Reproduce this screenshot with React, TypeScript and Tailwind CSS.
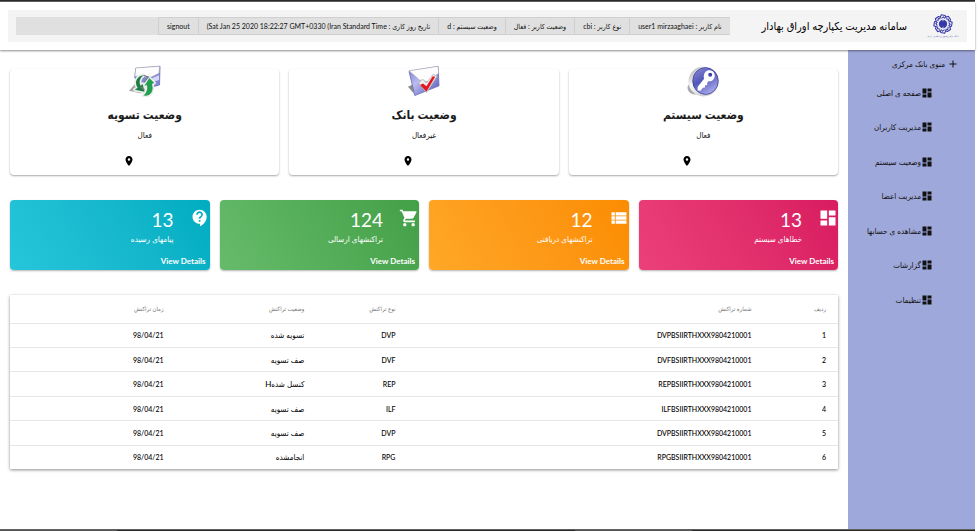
import type { ReactNode } from "react";
import {
  MdAdd,
  MdContactSupport,
  MdDashboard,
  MdRoom,
  MdShoppingCart,
  MdViewList,
} from "react-icons/md";

const headerItems = [
  "نام کاربر : user1 mirzaaghaei",
  "نوع کاربر : cbi",
  "وضعیت کاربر : فعال",
  "وضعیت سیستم : d",
];

const menuItems = [
  "صفحه ی اصلی",
  "مدیریت کاربران",
  "وضعیت سیستم",
  "مدیریت اعضا",
  "مشاهده ی حسابها",
  "گزارشات",
  "تنظیمات",
];

const stats = [
  { value: "13", label: "خطاهای سیستم", icon: MdDashboard, color: "from-[#ec407a] to-[#d81b60]" },
  { value: "12", label: "تراکنشهای دریافتی", icon: MdViewList, color: "from-[#ffa726] to-[#fb8c00]" },
  { value: "124", label: "تراکنشهای ارسالی", icon: MdShoppingCart, color: "from-[#66bb6a] to-[#43a047]" },
  { value: "13", label: "پیامهای رسیده", icon: MdContactSupport, color: "from-[#26c6da] to-[#00acc1]" },
];

const rows = [
  ["1", "DVPBSIIRTHXXX9804210001", "DVP", "تسویه شده", "98/04/21"],
  ["2", "DVFBSIIRTHXXX9804210001", "DVF", "صف تسویه", "98/04/21"],
  ["3", "REPBSIIRTHXXX9804210001", "REP", "کنسل شدهH", "98/04/21"],
  ["4", "ILFBSIIRTHXXX9804210001", "ILF", "صف تسویه", "98/04/21"],
  ["5", "DVPBSIIRTHXXX9804210001", "DVP", "صف تسویه", "98/04/21"],
  ["6", "RPGBSIIRTHXXX9804210001", "RPG", "انجامشده", "98/04/21"],
];

const columns = [
  { title: "ردیف", width: "w-[9%]", text: "text-[7px]" },
  { title: "شماره تراکنش", width: "w-[43%]", text: "text-[7px]" },
  { title: "نوع تراکنش", width: "w-[11%]", text: "text-[7px]" },
  { title: "وضعیت تراکنش", width: "w-[17%]", text: "text-[8px]" },
  { title: "زمان تراکنش", width: "w-[20%]", text: "text-[7px]" },
];

function Logo() {
  const petals = [0, 45, 90, 135, 180, 225, 270, 315];
  return (
    <svg viewBox="-12 -12 24 24" className="size-5" aria-hidden="true">
      <g fill="none" stroke="#3438a8" strokeWidth="1.3" strokeLinejoin="round">
        {petals.map((a) => (
          <path key={a} transform={`rotate(${a})`} d="M-3.400 -8.200 L-2 -11 L2.600 -10.200 L3.600 -7.400 M-2 -6.800 L.6 -8.600 L2.400 -6.600" />
        ))}
      </g>
      <circle r="5" fill="#3438a8" />
      <path d="M-1.500 -4.600h3v1.300h-3zM-1.500 3.300h3v1.300h-3z" fill="#8a8ed2" />
    </svg>
  );
}

function KeyIcon() {
  return (
    <svg viewBox="0 0 32 32" className="size-8" aria-hidden="true">
      <defs>
        <linearGradient id="key-face" x1="0" y1="0" x2="0.6" y2="1">
          <stop offset="0" stopColor="#8f90dc" />
          <stop offset="0.5" stopColor="#5457b8" />
          <stop offset="1" stopColor="#a6a8ec" />
        </linearGradient>
        <linearGradient id="key-rim" x1="0" y1="0" x2="1" y2="1">
          <stop offset="0" stopColor="#9a9a9a" />
          <stop offset="0.35" stopColor="#f7f7f7" />
          <stop offset="1" stopColor="#b5b5bd" />
        </linearGradient>
      </defs>
      <ellipse cx="8" cy="23" rx="7.5" ry="6.5" fill="#8e8e8e" opacity=".75" />
      <ellipse cx="16.5" cy="16.5" rx="15" ry="15" fill="url(#key-rim)" />
      <ellipse cx="18.5" cy="16" rx="12.8" ry="13.4" fill="url(#key-face)" stroke="#34368c" strokeWidth=".7" />
      <path d="M20.5 5.5c4-1 7.3 1.400 7.300 5s-3 6.300-6.300 5.800l-1.400 1.600.2 2-2.100.4-.3 2.200-2 .2-2.400 3-3-.3.300-3.700 6.300-7.900c-1-3.400.4-7.300 3.400-8.300z" fill="#fff" />
      <circle cx="23.200" cy="9.800" r="2" fill="#4043a6" />
    </svg>
  );
}

function EnvelopeCheckIcon() {
  return (
    <svg viewBox="0 0 33 32" className="size-8" aria-hidden="true">
      <defs>
        <linearGradient id="env-body" x1="0" y1="0" x2="1" y2="1">
          <stop offset="0" stopColor="#7579cf" />
          <stop offset="0.4" stopColor="#b9bcef" />
          <stop offset="1" stopColor="#4b4fae" />
        </linearGradient>
      </defs>
      <path d="M0 22l6-3v10z" fill="#8b8b8b" />
      <path d="M1 6L31 1l1 20L7 31z" fill="url(#env-body)" stroke="#6669b5" strokeWidth=".8" />
      <path d="M1 5.500L31 .8l.6 7L21 17l-9-2z" fill="#fdfdfd" stroke="#a9a9b2" strokeWidth=".7" />
      <path d="M11 18l4-4 4 4 7-9 4 2-11 17z" fill="#eee" stroke="#b0b0b0" strokeWidth=".8" />
      <path d="M12.500 20l3-1.500 3.500 3 6.500-10.500 2.500.5L19 27z" fill="#e01620" />
    </svg>
  );
}

function EnvelopeRefreshIcon() {
  return (
    <svg viewBox="0 0 33 32" className="size-8" aria-hidden="true">
      <path d="M0 26l8-9 5 12z" fill="#a5a5a5" />
      <path d="M7 3L32 .8 31.500 20 21 23 6 13z" fill="#8387d6" stroke="#6669b5" strokeWidth=".8" />
      <path d="M7 2.500L31.500.8 31 8l-8 4L6 11z" fill="#fdfdfd" stroke="#a9a9b2" strokeWidth=".7" />
      <path d="M24 13l7-3v5l-7 2z" fill="#d5d7f6" />
      <g stroke="#ececec" strokeWidth="3.500" strokeLinejoin="round" fill="#fff">
        <path d="M15 10c-7 1-10 7-6 13l-3 2 10 2-2-8-2 2c-2-4-1-8 3-11z" />
        <path d="M15 31c8 1 11-6 8.500-12l2.500-1-5-5-5 8 2.500-1c1 5-.5 8-3.500 11z" />
      </g>
      <path d="M15 10c-7 1-10 7-6 13l-3 2 10 2-2-8-2 2c-2-4-1-8 3-11z" fill="#1c7d44" />
      <path d="M15 31c8 1 11-6 8.500-12l2.500-1-5-5-5 8 2.500-1c1 5-.5 8-3.500 11z" fill="#22a04f" />
      <path d="M15 10l5 2-4 5M12 22l4 3" stroke="#7a7f86" strokeWidth="1.200" fill="none" />
    </svg>
  );
}

function StatusCard({ icon, title, state }: { icon: ReactNode; title: string; state: string }) {
  return (
    <section className="flex flex-1 flex-col items-center rounded-sm bg-white pb-2 shadow-[0_1px_2px_rgba(0,0,0,0.35)]">
      <div className="-mt-1">{icon}</div>
      <h2 className="mt-2 text-[12px] leading-5 font-bold text-[#1c1c1c]">{title}</h2>
      <p className="mt-1 text-[8px] leading-3">{state}</p>
      <MdRoom className="mt-3.5 mr-8 size-3 text-black" />
    </section>
  );
}

export default function App() {
  return (
    <div
      dir="rtl"
      className="flex min-h-screen flex-col bg-white pr-0.5 font-[Lato,'DejaVu_Sans_Condensed','DejaVu_Sans',sans-serif] text-[#111]"
    >
      <div className="h-0.5 border-b border-[#606060] bg-[#2b282b]" />
      <header className="relative p-2 shadow-[0_1px_2px_rgba(0,0,0,0.45)]">
        <div className="flex h-8 items-center bg-[#f4f4f4] px-2">
          <div className="flex w-8 flex-col items-center">
            <Logo />
            <span className="text-[2px] leading-1 whitespace-nowrap text-[#3438a8] italic">
              بانک مرکزی جمهوری اسلامی ایران
            </span>
          </div>
          <h1 className="mr-5 ml-8 text-[11px] leading-4 font-medium whitespace-nowrap text-black">
            سامانه مدیریت یکپارچه اوراق بهادار
          </h1>
          <div className="flex h-[18px] flex-1 bg-[#e0e0e0] text-[7px] leading-4">
            {headerItems.map((item) => (
              <span key={item} className="border border-r-0 border-[#cfcfcf] px-2 whitespace-nowrap">
                {item}
              </span>
            ))}
            <span className="border border-r-0 border-[#cfcfcf] px-2 whitespace-nowrap">
              تاریخ روز کاری : Sat Jan 25 2020 18:22:27 GMT+0330 (Iran Standard Time<bdi dir="rtl">)</bdi>
            </span>
            <button type="button" className="border border-r-0 border-[#cfcfcf] px-2">
              signout
            </button>
          </div>
        </div>
      </header>

      <div className="flex flex-1">
        <nav className="w-[127px] shrink-0 bg-[#9fa8da] pt-2 text-[8px] text-[#111]">
          <button type="button" className="flex h-3 items-center gap-0.5 pr-4">
            <MdAdd className="size-3" />
            منوی بانک مرکزی
          </button>
          <ul className="mt-[14px] flex h-56 flex-col justify-between">
            {menuItems.map((item) => (
              <li key={item} className="pr-[42px]">
                <a href="#" className="flex h-[17px] items-center whitespace-nowrap">
                  <MdDashboard className="size-3" />
                  {item}
                </a>
              </li>
            ))}
          </ul>
        </nav>

        <main className="min-w-0 flex-1 px-2.5 pt-[19px]">
          <div className="flex gap-2.5">
            <StatusCard icon={<KeyIcon />} title="وضعیت سیستم" state="فعال" />
            <StatusCard icon={<EnvelopeCheckIcon />} title="وضعیت بانک" state="غیرفعال" />
            <StatusCard icon={<EnvelopeRefreshIcon />} title="وضعیت تسویه" state="فعال" />
          </div>

          <div className="mt-[25px] flex gap-2.5">
            {stats.map(({ value, label, icon: Icon, color }) => (
              <section
                key={label}
                className={`flex flex-1 flex-col rounded-sm bg-linear-60 px-1 pt-2 pb-[3px] text-white shadow-[0_1px_2px_rgba(0,0,0,0.3)] ${color}`}
              >
                <div className="flex">
                  <Icon className="-mr-1 size-5" />
                  <div className="mr-4">
                    <p className="text-[19px] leading-6">{value}</p>
                    <p className="text-[8px] leading-[14px]">{label}</p>
                  </div>
                </div>
                <a href="#" className="mt-[9px] text-[8px] leading-3 font-bold">
                  View Details
                </a>
              </section>
            ))}
          </div>

          <div className="mt-[25px] shadow-[0_1px_3px_rgba(0,0,0,0.45)]">
            <table className="h-[174px] w-full table-fixed text-right">
              <thead>
                <tr className="h-7 text-[6px] text-[#777]">
                  {columns.map(({ title, width }) => (
                    <th key={title} scope="col" className={`${width} pr-3 font-normal`}>
                      {title}
                    </th>
                  ))}
                </tr>
              </thead>
              <tbody className="leading-3 font-medium text-black">
                {rows.map((row) => (
                  <tr key={row[0]} className="border-t border-[#e6e6e6]">
                    {row.map((cell, i) => (
                      <td key={i} className={`${columns[i].text} pr-3`}>
                        {cell}
                      </td>
                    ))}
                  </tr>
                ))}
              </tbody>
            </table>
          </div>
        </main>
      </div>

      <div dir="ltr" className="flex h-0.5 border-t border-[#606060] bg-[#2b282b]">
        <div className="w-[12%] bg-[#555]" />
        <div className="w-[47%]" />
        <div className="w-[12%] bg-[#555]" />
      </div>
    </div>
  );
}
